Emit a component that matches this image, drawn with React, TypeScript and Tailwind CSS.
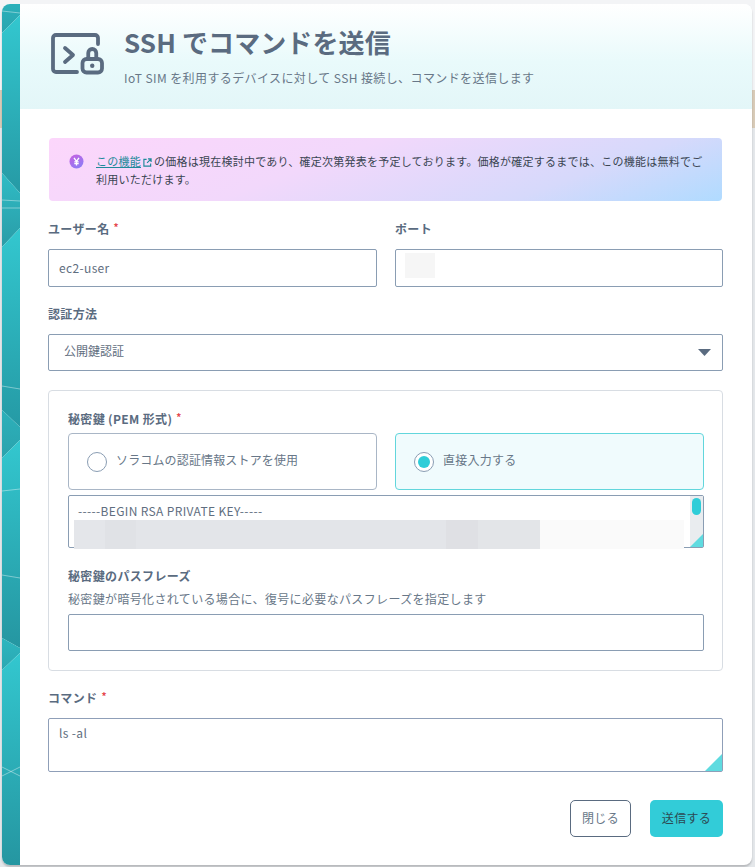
import React from "react";

const font = { fontFamily: '"Noto Sans CJK JP", "Noto Sans", sans-serif' };

function Req() {
  return <span className="ml-[4px] text-[10px] leading-[14px] align-top text-[#e5484d]">*</span>;
}

function Label({ children, req }: { children: React.ReactNode; req?: boolean }) {
  return (
    <div className="h-[18px] text-[12px] leading-[18px] font-bold text-[#5a6b80]">
      {children}
      {req && <Req />}
    </div>
  );
}

function Corner({ size }: { size: number }) {
  return (
    <svg className="absolute right-0 bottom-0" width={size} height={size} viewBox="0 0 10 10">
      <polygon points="10,0 10,10 0,10" fill="#5fdbe0" />
    </svg>
  );
}

const bands = [
  { id: "a", pts: "0,0 18,0 18,11 0,29", from: "#2bb0ba", to: "#2aa5af" },
  { id: "b", pts: "0,29 18,11 18,189 0,169", from: "#33c7cf", to: "#269aa5" },
  { id: "c", pts: "0,169 18,189 18,224 0,243", from: "#2fbcc5", to: "#2a9ca7" },
  { id: "d", pts: "0,243 18,224 18,423 0,406", from: "#33c7cf", to: "#259aa5" },
  { id: "e", pts: "0,406 18,423 18,436 0,454", from: "#2db0ba", to: "#2aa3ad" },
  { id: "f", pts: "0,454 18,436 18,644 0,634", from: "#33c7cf", to: "#2596a1" },
  { id: "g", pts: "0,634 18,644 18,649 0,666", from: "#2eb6bf", to: "#2ba8b2" },
  { id: "h", pts: "0,666 18,649 18,861 0,861", from: "#33c7cf", to: "#2596a1" },
];

const lines = [
  "0,7 18,9",
  "0,196 18,197",
  "0,204 18,204",
  "0,382 18,385",
  "0,487 18,485",
  "0,571 18,574",
  "0,763 18,772",
  "0,772 18,763",
];

function Strip() {
  return (
    <svg className="shrink-0" width="18" height="861" viewBox="0 0 18 861">
      <defs>
        {bands.map((b) => (
          <linearGradient key={b.id} id={b.id} x1="0" y1="0" x2="0" y2="1">
            <stop offset="0" stopColor={b.from} />
            <stop offset="1" stopColor={b.to} />
          </linearGradient>
        ))}
      </defs>
      {bands.map((b) => (
        <polygon key={b.id} points={b.pts} fill={`url(#${b.id})`} />
      ))}
      {lines.map((l) => (
        <polyline key={l} points={l} stroke="#ffffff" strokeOpacity="0.4" strokeWidth="1" fill="none" />
      ))}
    </svg>
  );
}

export default function App() {
  return (
    <div
      style={font}
      className="w-[755px] h-[867px] pt-[4px] pl-[2px] overflow-hidden tracking-[0.35px] bg-[linear-gradient(180deg,#f3f4f6_0,#f3f4f6_90px,#d8cbb8_90px,#d8cbb8_128px,#e4e7ea_128px,#e4e7ea_867px)]"
    >
      <div className="w-[750px] h-[861px] rounded-lg overflow-hidden flex bg-white shadow-[0_2px_2px_rgba(0,0,0,0.2)]">
        <Strip />
        <div className="flex-1 flex flex-col">
          <div className="h-[105px] shrink-0 flex bg-[linear-gradient(180deg,#ffffff_0%,#e9fafb_55%,#e3f6f8_100%)] pl-[30px]">
            <svg className="mt-[28px] shrink-0" width="54" height="44" viewBox="0 0 54 44" fill="none" stroke="#5a6b80" strokeWidth="3.8" strokeLinecap="round" strokeLinejoin="round">
              <path d="M27 40H6a3 3 0 0 1-3-3V6a3 3 0 0 1 3-3h39a3 3 0 0 1 3 3v6" />
              <path d="M15 16l8 7-8 7" />
              <rect x="32.500" y="27" width="19.500" height="13.500" rx="4" />
              <path d="M38.250 27v-6a4 4 0 0 1 8 0v6" />
              <circle cx="42.250" cy="33.750" r="2.200" fill="#5a6b80" stroke="none" />
            </svg>
            <div className="ml-[20px]">
              <div className="mt-[19px] text-[26px] leading-[38px] font-bold tracking-[0.1px] text-[#5a6b80]">SSH でコマンドを送信</div>
              <div className="mt-[8px] text-[12px] leading-[18px] tracking-[0.4px] text-[#687788]">
                IoT SIM を利用するデバイスに対して SSH 接続し、コマンドを送信します
              </div>
            </div>
          </div>
          <div className="flex-1 pl-[28px] pr-[30px] pt-[29px]">
            <div className="mx-px h-[63px] rounded flex pl-[20px] pr-[14px] pt-[14px] bg-[linear-gradient(160deg,#fcd6fb_0%,#f2d8fb_40%,#d6d9fb_75%,#b0dbff_100%)]">
              <svg className="mt-[2px] shrink-0" width="15" height="15" viewBox="0 0 15 15">
                <defs>
                  <linearGradient id="yen" x1="0" y1="0" x2="0.6" y2="1">
                    <stop offset="0" stopColor="#c95fe0" />
                    <stop offset="1" stopColor="#8f7cf5" />
                  </linearGradient>
                </defs>
                <circle cx="7.500" cy="7.500" r="7" fill="url(#yen)" />
                <path d="M5 3.800l2.500 3.600L10 3.800M7.500 7.400v4M5.300 7.800h4.400M5.300 9.600h4.400" stroke="#fff" strokeWidth="1.300" fill="none" />
              </svg>
              <div className="ml-[12px] text-[11px] leading-[18px] tracking-[0.24px] text-[#3a4552]">
                <span className="underline text-[#1f8a9a]">この機能</span>
                <svg className="inline-block mx-[2px] align-[-1px]" width="9" height="9" viewBox="0 0 10 10" fill="none" stroke="#1f8a9a" strokeWidth="1.300">
                  <path d="M4 1.500H1v7.500h7.500V6M5.500 1h3.500v3.500M9 1L4.500 5.500" />
                </svg>
                の価格は現在検討中であり、確定次第発表を予定しております。価格が確定するまでは、この機能は無料でご利用いただけます。
              </div>
            </div>

            <div className="mt-[19px] grid grid-cols-[329px_328px] gap-x-[18px]">
              <div>
                <Label req>ユーザー名</Label>
                <input
                  readOnly
                  value="ec2-user"
                  className="mt-[11px] w-full h-[38px] border border-[#8a9db3] rounded-[2px] px-[10px] pb-[2px] text-[12px] text-[#5f6e80] outline-none"
                />
              </div>
              <div>
                <Label>ポート</Label>
                <div className="mt-[11px] h-[38px] border border-[#8a9db3] rounded-[2px] pl-[9px] pt-[3px]">
                  <div className="w-[30px] h-[25px] bg-[#f6f6f6]" />
                </div>
              </div>
            </div>

            <div className="mt-[18px]">
              <Label>認証方法</Label>
              <div className="mt-[11px] h-[37px] border border-[#8a9db3] rounded-[2px] pl-[15px] pr-[11px] flex items-center justify-between text-[12px] text-[#5f6e80]">
                <span className="-mt-[3px] tracking-[0px]">公開鍵認証</span>
                <svg width="13" height="7" viewBox="0 0 13 7">
                  <polygon points="0,0 13,0 6.500,7" fill="#5a6b80" />
                </svg>
              </div>
            </div>

            <div className="mt-[19px] h-[281px] border border-[#d8dde3] rounded-[4px] pl-[19px] pr-[18px] pt-[19px]">
              <Label req>秘密鍵 (PEM 形式)</Label>
              <div className="mt-[5px] grid grid-cols-[309px_309px] gap-x-[18px]">
                <div className="h-[57px] border border-[#a9b6c6] rounded-[4px] flex items-center pl-[18px]">
                  <span className="w-[20px] h-[20px] rounded-full border border-[#8a9db3]" />
                  <span className="ml-[9px] -mt-[3px] text-[12px] tracking-[0.15px] text-[#687788]">ソラコムの認証情報ストアを使用</span>
                </div>
                <div className="h-[57px] border border-[#62d6dc] bg-[#f0fbfd] rounded-[4px] flex items-center pl-[18px]">
                  <span className="w-[20px] h-[20px] rounded-full border border-[#8a9db3] bg-white flex items-center justify-center">
                    <span className="w-[12px] h-[12px] rounded-full bg-[#2fcdd8]" />
                  </span>
                  <span className="ml-[9px] -mt-[3px] text-[12px] tracking-[0.25px] text-[#687788]">直接入力する</span>
                </div>
              </div>

              <div className="relative mt-[5px] h-[53px] border border-[#8a9db3] rounded-[2px]">
                <div className="pl-[9px] pt-[6px] text-[12px] leading-[18px] text-[#5f6e80]">-----BEGIN RSA PRIVATE KEY-----</div>
                <div className="absolute right-0 top-0 bottom-0 w-[13px] bg-[#e9ecef]">
                  <div className="mx-auto mt-[2px] w-[9px] h-[17px] rounded-full bg-[#2fcdd8]" />
                </div>
                <Corner size={13} />
                <div className="absolute left-[5px] top-[24px] h-[29px] w-[466px] bg-[linear-gradient(90deg,#e4e6ea_0,#e4e6ea_31px,#e0e2e6_31px,#e0e2e6_62px,#e3e5e9_62px,#e3e5e9_372px,#dfe0e4_372px,#dfe0e4_404px,#e3e5e8_404px,#e3e5e8_466px)]" />
                <div className="absolute left-[471px] top-[24px] h-[29px] w-[144px] bg-[#fafafa]" />
              </div>

              <div className="mt-[19px]">
                <Label>秘密鍵のパスフレーズ</Label>
                <div className="mt-[5px] h-[18px] text-[12px] leading-[18px] text-[#687788]">
                  秘密鍵が暗号化されている場合に、復号に必要なパスフレーズを指定します
                </div>
                <input readOnly className="mt-[6px] w-full h-[37px] border border-[#8a9db3] rounded-[2px] outline-none block" />
              </div>
            </div>

            <div className="mt-[18px]">
              <Label req>コマンド</Label>
              <div className="relative mt-[11px] h-[54px] border border-[#8f9fb8] rounded-[2px] pl-[10px] pt-[5px] text-[12px] leading-[18px] text-[#5f6e80]">
                ls -al
                <Corner size={17} />
              </div>
            </div>

            <div className="mt-[28px] flex justify-end gap-[19px]">
              <button className="w-[61px] h-[37px] border border-[#5a6b80] rounded-[5px] bg-white pb-px text-[12px] text-[#687788]">閉じる</button>
              <button className="w-[73px] h-[37px] rounded-[5px] bg-[#32ccd8] pb-px text-[12px] text-[#2c4a54]">送信する</button>
            </div>
          </div>
        </div>
      </div>
    </div>
  );
}
